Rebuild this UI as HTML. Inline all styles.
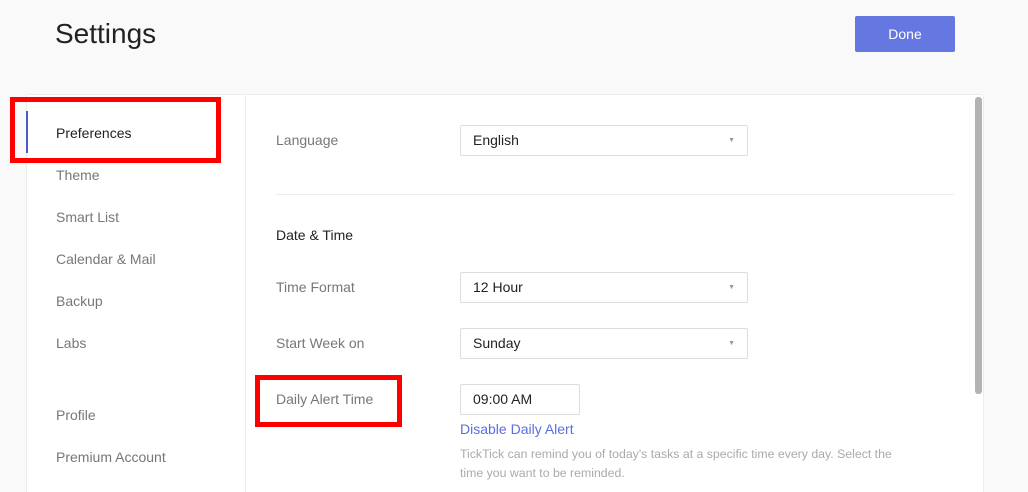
<!DOCTYPE html><html style="height:492px;overflow:hidden"><head><style>
body{margin:0;width:1028px;height:492px;background:#f9f9f9;font-family:"Liberation Sans",sans-serif;position:relative;overflow:hidden}
.a{position:absolute}
.side{left:26px;top:94px;width:219px;height:420px;background:#fff;border:1px solid #ececec}
.main{left:246px;top:94px;width:737px;height:420px;background:#fff;border:1px solid #ececec;border-left:none;border-radius:0 3px 0 0}
.nav{left:56px;font-size:14px;color:#777}
.lbl{left:276px;font-size:14px;color:#777}
.sel{left:460px;width:286px;height:29px;border:1px solid #ddd;border-radius:2px;background:#fff;font-size:14px;color:#222;line-height:29px;box-sizing:content-box}
.sel span{position:absolute;left:12px}
.sel i{position:absolute;right:12px;top:0;font-style:normal;font-size:7px;color:#999}
.red{border:5px solid #f00;box-sizing:border-box}
</style></head><body>
<div class="a" style="left:55px;top:18px;font-size:28px;color:#222">Settings</div>
<div class="a" style="left:855px;top:16px;width:100px;height:36px;background:#6577e0;border-radius:2px;color:#fff;font-size:14px;line-height:36px;text-align:center">Done</div>
<div class="a side"></div>
<div class="a main"></div>
<div class="a" style="left:245px;top:94px;width:1px;height:400px;background:#ececec"></div>
<div class="a" style="left:26px;top:111px;width:2px;height:42px;background:#4a5bc4"></div>
<div class="a nav" style="top:125px;color:#222">Preferences</div>
<div class="a nav" style="top:167px">Theme</div>
<div class="a nav" style="top:209px">Smart List</div>
<div class="a nav" style="top:251px">Calendar &amp; Mail</div>
<div class="a nav" style="top:293px">Backup</div>
<div class="a nav" style="top:335px">Labs</div>
<div class="a nav" style="top:407px">Profile</div>
<div class="a nav" style="top:449px">Premium Account</div>
<div class="a lbl" style="top:132px">Language</div>
<div class="a sel" style="top:125px"><span>English</span><i>▼</i></div>
<div class="a" style="left:276px;top:194px;width:678px;height:1px;background:#ececec"></div>
<div class="a lbl" style="top:227px;color:#222">Date &amp; Time</div>
<div class="a lbl" style="top:279px">Time Format</div>
<div class="a sel" style="top:272px"><span>12 Hour</span><i>▼</i></div>
<div class="a lbl" style="top:335px">Start Week on</div>
<div class="a sel" style="top:328px"><span>Sunday</span><i>▼</i></div>
<div class="a lbl" style="top:391px">Daily Alert Time</div>
<div class="a sel" style="top:384px;width:118px"><span>09:00 AM</span></div>
<div class="a" style="left:460px;top:421px;font-size:14px;color:#5b6ee0">Disable Daily Alert</div>
<div class="a" style="left:460px;top:445px;width:448px;font-size:12.3px;line-height:19px;color:#aaa">TickTick can remind you of today's tasks at a specific time every day. Select the time you want to be reminded.</div>
<div class="a" style="left:975px;top:97px;width:7px;height:297px;background:#b3b3b3;border-radius:3px"></div>
<div class="a red" style="left:10px;top:97px;width:211px;height:66px"></div>
<div class="a red" style="left:255px;top:375px;width:147px;height:52px"></div>
</body></html>
